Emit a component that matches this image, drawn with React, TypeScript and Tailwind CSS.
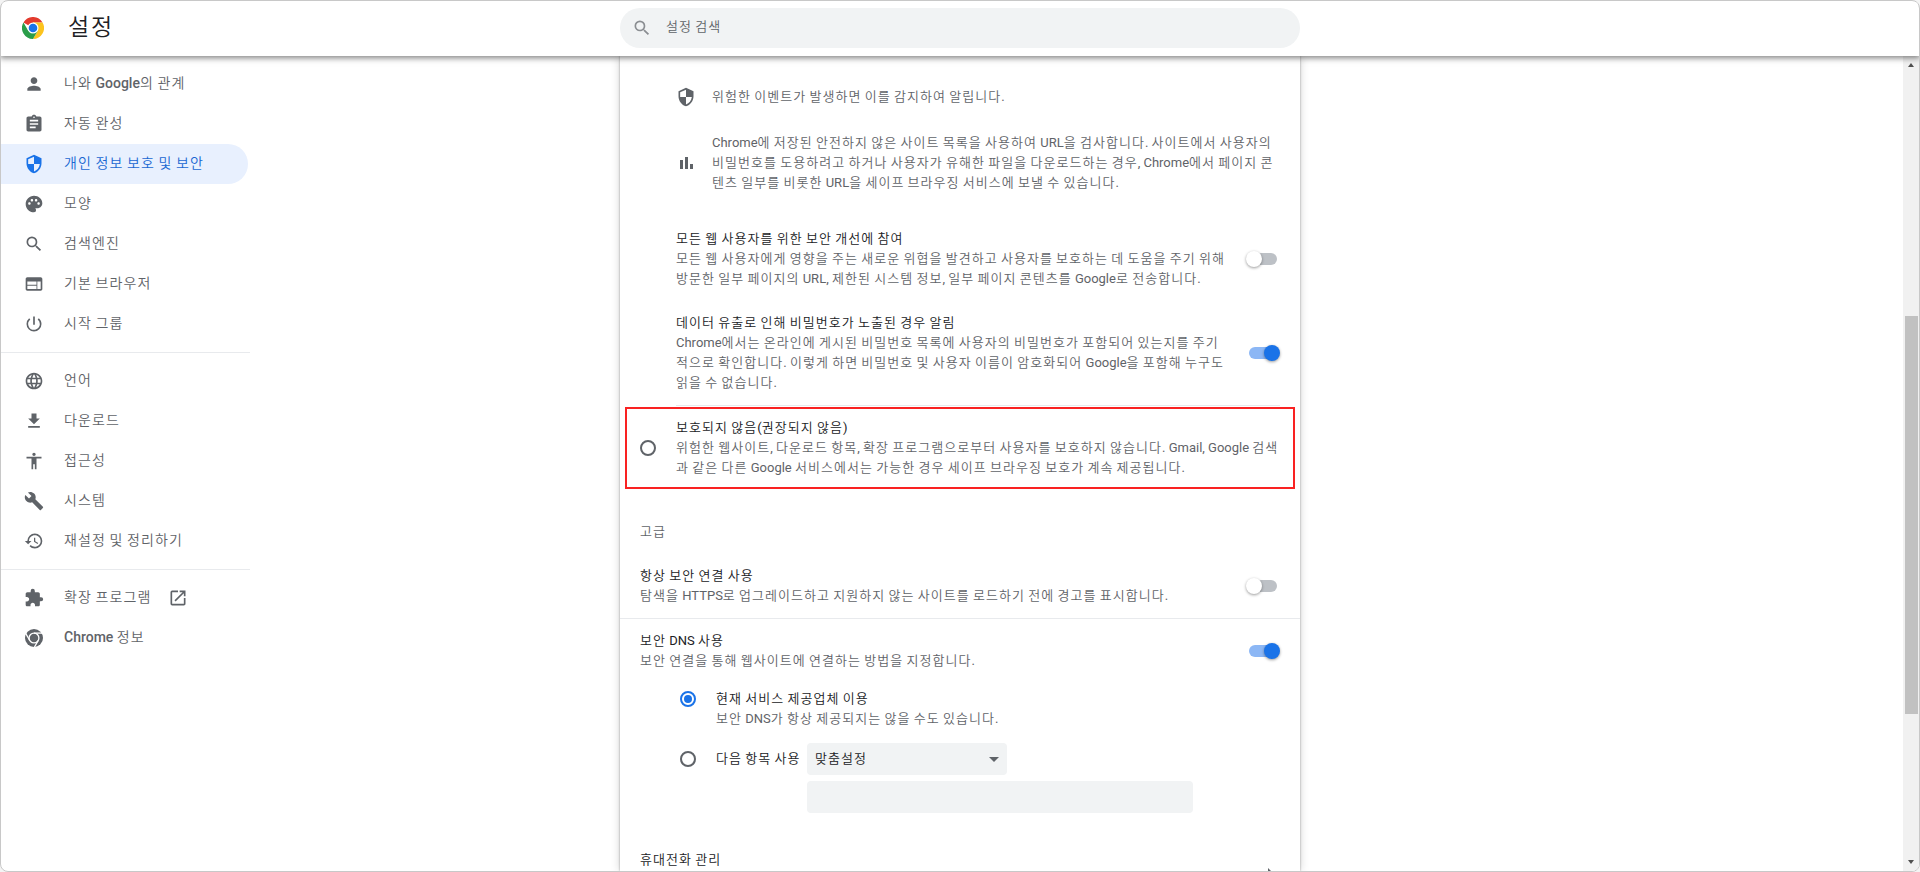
import { Fragment, type ComponentType, type ReactNode } from "react"
import {
  MdAccessibility,
  MdArrowDropDown,
  MdArrowRight,
  MdAssignment,
  MdBuild,
  MdExtension,
  MdFileDownload,
  MdHistory,
  MdLanguage,
  MdOpenInNew,
  MdPalette,
  MdPerson,
  MdPowerSettingsNew,
  MdSearch,
  MdSecurity,
  MdWeb,
} from "react-icons/md"

interface MenuItem {
  label: string;
  icon: ComponentType<{ className?: string }>;
  active?: boolean;
  external?: boolean;
}

function ChromeIcon({ className }: { className?: string }) {
  return (
    <svg viewBox="0 0 20 20" className={className}>
      <circle cx="10" cy="10" r="9" fill="currentColor" />
      <g fill="none" stroke="#fff" strokeWidth="1.3">
        <circle cx="10" cy="10" r="4.9" />
        <path d="M10 5.1H19" />
        <path d="M10 5.1H19" transform="rotate(120 10 10)" />
        <path d="M10 5.1H19" transform="rotate(240 10 10)" />
      </g>
    </svg>
  )
}

function BarsIcon() {
  return (
    <svg viewBox="0 0 20 20" fill="currentColor" className="size-5">
      <path d="M4 7h3v9H4zM9 4h3v12H9zM14 11h3v5h-3z" />
    </svg>
  )
}

const menuGroups: MenuItem[][] = [
  [
    { label: "나와 Google의 관계", icon: MdPerson },
    { label: "자동 완성", icon: MdAssignment },
    { label: "개인 정보 보호 및 보안", icon: MdSecurity, active: true },
    { label: "모양", icon: MdPalette },
    { label: "검색엔진", icon: MdSearch },
    { label: "기본 브라우저", icon: MdWeb },
    { label: "시작 그룹", icon: MdPowerSettingsNew },
  ],
  [
    { label: "언어", icon: MdLanguage },
    { label: "다운로드", icon: MdFileDownload },
    { label: "접근성", icon: MdAccessibility },
    { label: "시스템", icon: MdBuild },
    { label: "재설정 및 정리하기", icon: MdHistory },
  ],
  [
    { label: "확장 프로그램", icon: MdExtension, external: true },
    { label: "Chrome 정보", icon: ChromeIcon },
  ],
]

// Hangul runs are set lighter and a little wider than the Latin ones
function Ko({ children }: { children: string }) {
  return (
    <>
      {children.split(/([\uac00-\ud7a3]+)/).map((part, i) =>
        i % 2 ? (
          <span key={i} className="font-[350] tracking-[0.08em]">{part}</span>
        ) : (
          <Fragment key={i}>{part}</Fragment>
        )
      )}
    </>
  )
}

function Lines({ title, lines }: { title?: string; lines: string[] }) {
  return (
    <div className="whitespace-nowrap">
      {title && <p className="text-[#202124]"><Ko>{title}</Ko></p>}
      {lines.map((line) => (
        <p key={line}><Ko>{line}</Ko></p>
      ))}
    </div>
  )
}

function Toggle({ on }: { on?: boolean }) {
  return (
    <div className={`relative mr-[23px] h-3 w-7 shrink-0 rounded-full ${on ? "bg-[#8cb7f5]" : "bg-[#bdc1c6]"}`}>
      <div
        className={`absolute -top-0.5 size-4 rounded-full shadow-[0_1px_3px_rgba(0,0,0,0.4)] ${
          on ? "left-[15px] bg-[#1a73e8]" : "-left-[3px] bg-white"
        }`}
      />
    </div>
  )
}

function Radio({ checked }: { checked?: boolean }) {
  return (
    <div
      className={`flex size-4 shrink-0 items-center justify-center rounded-full border-2 ${
        checked ? "border-[#1a73e8]" : "border-[#5f6368]"
      }`}
    >
      {checked && <div className="size-2 rounded-full bg-[#1a73e8]" />}
    </div>
  )
}

function ToggleRow({ className, on, children }: { className: string; on?: boolean; children: ReactNode }) {
  return (
    <div className={`flex shrink-0 items-center justify-between ${className}`}>
      {children}
      <Toggle on={on} />
    </div>
  )
}

function ChromeLogo() {
  return (
    <svg viewBox="0 0 48 48" className="size-[22px]">
      <path fill="#e33b2e" d="M24 24 3.2 12A24 24 0 0 1 44.8 12L24 12Z" />
      <path fill="#fcc31e" d="M24 12H44.8A24 24 0 0 1 24 48L34.4 30Z" />
      <path fill="#2a9d49" d="M24 48A24 24 0 0 1 3.2 12L13.6 30 34.4 30Z" />
      <circle cx="24" cy="24" r="12" fill="#fff" />
      <circle cx="24" cy="24" r="9.4" fill="#1a73e8" />
    </svg>
  )
}

function Header() {
  return (
    <header className="relative z-10 flex h-[55px] shrink-0 items-center bg-white pb-px shadow-[0_1px_6px_1px_rgba(0,0,0,0.5)]">
      <div className="flex w-[619px] items-center gap-6 pl-[21px]">
        <ChromeLogo />
        <h1 className="pb-px text-[23px] leading-8 text-[#202124]"><Ko>설정</Ko></h1>
      </div>
      <div className="flex h-10 w-[680px] items-center gap-3.5 rounded-full bg-[#f1f3f4] pl-3">
        <MdSearch className="size-5 text-[#8b8e92]" />
        <span className="pb-0.5"><Ko>설정 검색</Ko></span>
      </div>
    </header>
  )
}

function Sidebar() {
  return (
    <nav className="w-[249px] shrink-0 pt-2 text-sm font-medium">
      {menuGroups.map((group, i) => (
        <div key={i} className={i > 0 ? "mt-2 border-t border-[#e8eaed] pt-2" : ""}>
          {group.map(({ label, icon: Icon, active, external }) => (
            <div
              key={label}
              className={`flex h-10 w-[247px] items-center pl-[23px] ${
                active ? "rounded-r-full bg-[#e8f0fe] text-[#1967d2]" : ""
              }`}
            >
              <Icon className={`size-5 ${active ? "text-[#1a73e8]" : ""}`} />
              <span className="ml-5 pb-[3px] whitespace-nowrap"><Ko>{label}</Ko></span>
              {external && <MdOpenInNew className="ml-[17px] size-5" />}
            </div>
          ))}
        </div>
      ))}
    </nav>
  )
}

function SecurityCard() {
  return (
    <main className="flex w-[680px] shrink-0 flex-col bg-white shadow-[0_0_2px_rgba(0,0,0,0.35),0_0_9px_rgba(0,0,0,0.18)]">
      {/* standard protection details */}
      <div className="mt-[31px] flex shrink-0 items-center gap-4 pl-14">
        <MdSecurity className="size-5" />
        <Lines lines={["위험한 이벤트가 발생하면 이를 감지하여 알립니다."]} />
      </div>
      <div className="mt-[26px] flex shrink-0 items-center gap-4 pl-14">
        <BarsIcon />
        <Lines
          lines={[
            "Chrome에 저장된 안전하지 않은 사이트 목록을 사용하여 URL을 검사합니다. 사이트에서 사용자의",
            "비밀번호를 도용하려고 하거나 사용자가 유해한 파일을 다운로드하는 경우, Chrome에서 페이지 콘",
            "텐츠 일부를 비롯한 URL을 세이프 브라우징 서비스에 보낼 수 있습니다.",
          ]}
        />
      </div>
      <ToggleRow className="mt-9 pl-14">
        <Lines
          title="모든 웹 사용자를 위한 보안 개선에 참여"
          lines={[
            "모든 웹 사용자에게 영향을 주는 새로운 위협을 발견하고 사용자를 보호하는 데 도움을 주기 위해",
            "방문한 일부 페이지의 URL, 제한된 시스템 정보, 일부 페이지 콘텐츠를 Google로 전송합니다.",
          ]}
        />
      </ToggleRow>
      <ToggleRow className="mt-6 pl-14" on>
        <Lines
          title="데이터 유출로 인해 비밀번호가 노출된 경우 알림"
          lines={[
            "Chrome에서는 온라인에 게시된 비밀번호 목록에 사용자의 비밀번호가 포함되어 있는지를 주기",
            "적으로 확인합니다. 이렇게 하면 비밀번호 및 사용자 이름이 암호화되어 Google을 포함해 누구도",
            "읽을 수 없습니다.",
          ]}
        />
      </ToggleRow>
      <div className="mt-3 mr-5 ml-14 shrink-0 border-t border-[#e8eaed]" />

      {/* no protection */}
      <div className="mx-[5px] mt-px flex h-[82px] shrink-0 items-center gap-5 border-2 border-[#f92222] pl-[13px]">
        <Radio />
        <Lines
          title="보호되지 않음(권장되지 않음)"
          lines={[
            "위험한 웹사이트, 다운로드 항목, 확장 프로그램으로부터 사용자를 보호하지 않습니다. Gmail, Google 검색",
            "과 같은 다른 Google 서비스에서는 가능한 경우 세이프 브라우징 보호가 계속 제공됩니다.",
          ]}
        />
      </div>

      {/* advanced */}
      <h2 className="mt-[33px] shrink-0 pl-5"><Ko>고급</Ko></h2>
      <ToggleRow className="mt-6 pl-5">
        <Lines title="항상 보안 연결 사용" lines={["탐색을 HTTPS로 업그레이드하고 지원하지 않는 사이트를 로드하기 전에 경고를 표시합니다."]} />
      </ToggleRow>
      <ToggleRow className="mt-3 border-t border-[#e8eaed] pt-3 pl-5" on>
        <Lines title="보안 DNS 사용" lines={["보안 연결을 통해 웹사이트에 연결하는 방법을 지정합니다."]} />
      </ToggleRow>
      <div className="mt-[18px] flex shrink-0 gap-5 pl-[60px]">
        <div className="pt-0.5"><Radio checked /></div>
        <Lines title="현재 서비스 제공업체 이용" lines={["보안 DNS가 항상 제공되지는 않을 수도 있습니다."]} />
      </div>
      <div className="mt-[14px] flex h-8 shrink-0 items-center pl-[60px] text-[#202124]">
        <Radio />
        <span className="ml-5 w-[91px] whitespace-nowrap"><Ko>다음 항목 사용</Ko></span>
        <div className="flex h-8 w-[200px] items-center justify-between rounded bg-[#f1f3f4] pr-px pl-2">
          <span><Ko>맞춤설정</Ko></span>
          <MdArrowDropDown className="size-6 text-[#5f6368]" />
        </div>
      </div>
      <div className="mt-1.5 ml-[187px] h-8 w-[386px] shrink-0 rounded bg-[#f1f3f4]" />
      <div className="mt-[37px] flex shrink-0 justify-between pr-[18px] pl-5 text-[#202124]">
        <span><Ko>휴대전화 관리</Ko></span>
        <MdArrowRight className="mt-[11px] size-6 text-[#5f6368]" />
      </div>
    </main>
  )
}

function Scrollbar() {
  return (
    <div className="flex w-4 shrink-0 flex-col items-center bg-[#f1f1f1]">
      <div className="mt-[7px] border-x-[3.5px] border-b-4 border-x-transparent border-b-[#505050]" />
      <div className="mt-[249px] h-[398px] w-[13px] bg-[#c1c1c1]" />
      <div className="mt-auto mb-[7px] border-x-[3.5px] border-t-4 border-x-transparent border-t-[#505050]" />
    </div>
  )
}

function App() {
  return (
    <div className="h-[872px] w-[1920px] bg-[#f4f4f4]">
      <div className="flex h-full flex-col overflow-hidden rounded-lg border border-[#c8c8c8] bg-white font-[Roboto,'Noto_Sans_CJK_KR',sans-serif] text-[13px] leading-5 text-[#5f6368]">
        <Header />
        <div className="flex min-h-0 flex-1 justify-between">
          <div className="flex gap-[370px]">
            <Sidebar />
            <SecurityCard />
          </div>
          <Scrollbar />
        </div>
      </div>
    </div>
  )
}

export default App
